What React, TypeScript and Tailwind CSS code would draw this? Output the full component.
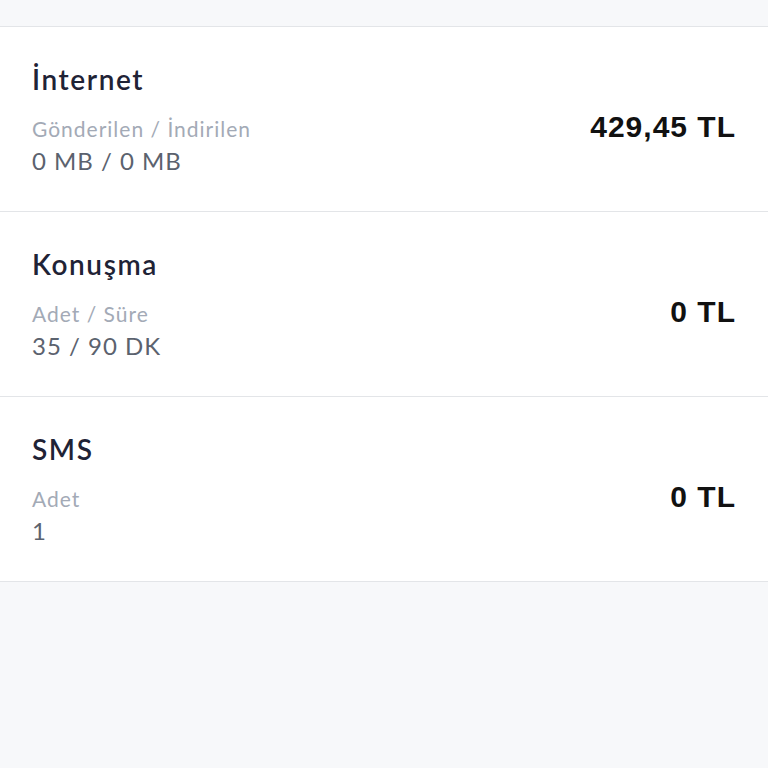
import React from 'react';

type Row = { title: string; label: string; value: string; price: string };

const rows: Row[] = [
  { title: 'İnternet', label: 'Gönderilen / İndirilen', value: '0 MB / 0 MB', price: '429,45 TL' },
  { title: 'Konuşma', label: 'Adet / Süre', value: '35 / 90 DK', price: '0 TL' },
  { title: 'SMS', label: 'Adet', value: '1', price: '0 TL' },
];

const UsageRow: React.FC<{ row: Row }> = ({ row }) => (
  <div className="bg-white border-b border-[#e3e5e8] h-[185px] px-8 flex items-center justify-between">
    <div className="flex flex-col pt-[2px]">
      <span className="text-[28px] leading-[34px] font-semibold tracking-[1.6px] text-[#1f2336] font-[Lato,sans-serif]">{row.title}</span>
      <span className="mt-[19px] text-[21px] leading-[28px] tracking-[1px] text-[#a3aab6] font-[Lato,sans-serif]">{row.label}</span>
      <span className="text-[24px] leading-[36px] tracking-[1px] text-[#5b626e] font-[Lato,sans-serif]">{row.value}</span>
    </div>
    <span className="pt-[14px] text-[30px] font-bold text-[#111111] tracking-[1px] font-['Liberation_Sans',Arial,sans-serif]">
      {row.price}
    </span>
  </div>
);

export default function App() {
  return (
    <div className="w-[768px] h-[768px] bg-[#f7f8fa] overflow-hidden">
      <div className="h-[27px] border-b border-[#e3e5e8]" />
      {rows.map(r => (
        <UsageRow key={r.title} row={r} />
      ))}
    </div>
  );
}
